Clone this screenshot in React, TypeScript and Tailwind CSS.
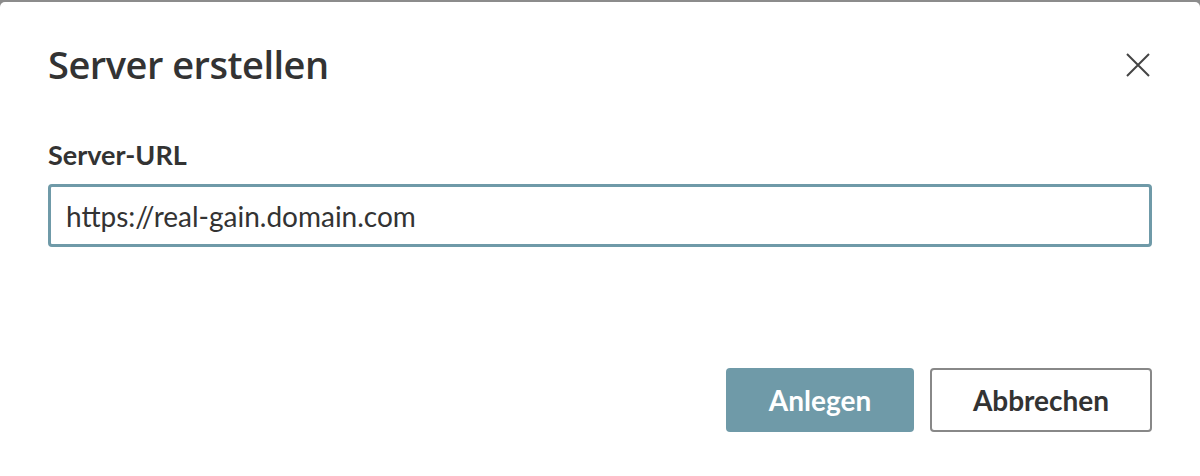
export default function App() {
  return (
    <div className="h-[476px] w-[1200px] bg-[#8c8c8c] pt-[2px]">
      <div className="flex h-[474px] flex-col rounded-t-[5px] bg-white px-12 pt-[38px] font-['Lato',sans-serif] text-[#333]">
        <div className="flex items-center justify-between">
          <h2 className="font-['Open_Sans',sans-serif] text-[38px] font-semibold leading-[48px] tracking-[-0.5px] text-[#333]">
            Server erstellen
          </h2>
          <button className="mr-[1px] mt-[2px] text-[#444]">
            <svg width="26" height="26" viewBox="0 0 26 26" fill="none" stroke="currentColor" strokeWidth="2">
              <path d="M2 2L24 24M24 2L2 24" />
            </svg>
          </button>
        </div>

        <label className="mt-[51px] text-[27px] font-bold leading-[32px]">Server-URL</label>
        <input
          className="mt-[13px] h-[63px] w-full rounded-[4px] border-[3px] border-[#6f9aa8] px-[15px] text-[28px] text-[#333] outline-none"
          defaultValue="https://real-gain.domain.com"
        />

        <div className="mt-[121px] flex justify-end gap-4">
          <button className="h-[64px] w-[188px] rounded-[4px] bg-[#6f9aa8] text-[28px] font-bold text-white">
            Anlegen
          </button>
          <button className="h-[64px] w-[222px] rounded-[4px] border-2 border-[#888] text-[28px] font-bold text-[#333]">
            Abbrechen
          </button>
        </div>
      </div>
    </div>
  )
}
